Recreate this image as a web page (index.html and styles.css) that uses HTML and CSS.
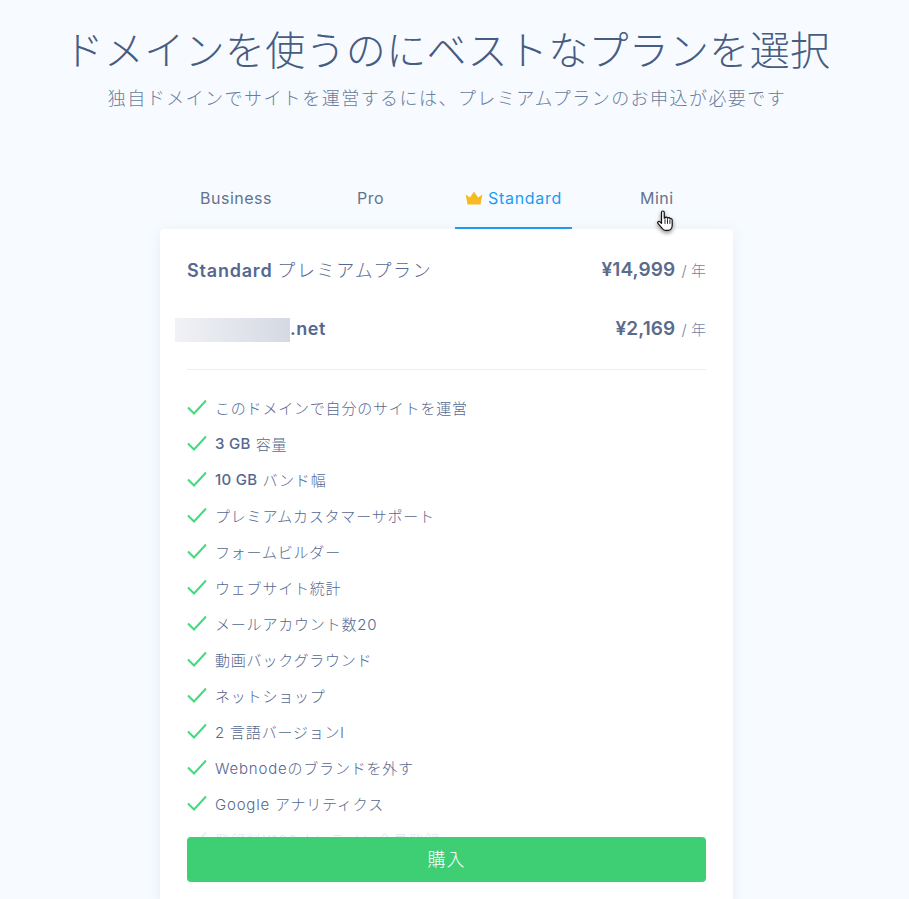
FILE: index.html
```html
<!DOCTYPE html>
<html lang="ja">
<head>
<meta charset="utf-8">
<title>プラン選択</title>
<link rel="stylesheet" href="styles.css">
</head>
<body>
<header class="head">
  <h1 class="title">ドメインを使うのにベストなプランを選択</h1>
  <p class="subtitle">独自ドメインでサイトを運営するには、プレミアムプランのお申込が必要です</p>
</header>
<nav class="tabs">
  <a class="tab tab-business">Business</a>
  <a class="tab tab-pro">Pro</a>
  <a class="tab active"><svg class="crown" viewBox="0 0 18 14"><path d="M.6 3.400 5 6.400 9 .6l4 5.800 4.400-3-1.900 10H2.500z" fill="#f7bb22"/></svg>Standard</a>
  <a class="tab">Mini</a>
</nav>
<main class="card">
  <div class="row first">
    <div class="name"><b>Standard</b> プレミアムプラン</div>
    <div class="price"><b>¥14,999</b> <span>/ 年</span></div>
  </div>
  <div class="row second">
    <div class="domain"><i class="blur"></i><b>.net</b></div>
    <div class="price"><b>¥2,169</b> <span>/ 年</span></div>
  </div>
  <hr class="rule">
  <ul class="features">
    <li><svg class="check" viewBox="0 0 20 16"><path d="M1 8.5 7 14.5 19 1.5"/></svg>このドメインで自分のサイトを運営</li>
    <li><svg class="check" viewBox="0 0 20 16"><path d="M1 8.5 7 14.5 19 1.5"/></svg><b>3 GB</b> 容量</li>
    <li><svg class="check" viewBox="0 0 20 16"><path d="M1 8.5 7 14.5 19 1.5"/></svg><b>10 GB</b> バンド幅</li>
    <li><svg class="check" viewBox="0 0 20 16"><path d="M1 8.5 7 14.5 19 1.5"/></svg>プレミアムカスタマーサポート</li>
    <li><svg class="check" viewBox="0 0 20 16"><path d="M1 8.5 7 14.5 19 1.5"/></svg>フォームビルダー</li>
    <li><svg class="check" viewBox="0 0 20 16"><path d="M1 8.5 7 14.5 19 1.5"/></svg>ウェブサイト統計</li>
    <li><svg class="check" viewBox="0 0 20 16"><path d="M1 8.5 7 14.5 19 1.5"/></svg>メールアカウント数20</li>
    <li><svg class="check" viewBox="0 0 20 16"><path d="M1 8.5 7 14.5 19 1.5"/></svg>動画バックグラウンド</li>
    <li><svg class="check" viewBox="0 0 20 16"><path d="M1 8.5 7 14.5 19 1.5"/></svg>ネットショップ</li>
    <li><svg class="check" viewBox="0 0 20 16"><path d="M1 8.5 7 14.5 19 1.5"/></svg>2 言語バージョンl</li>
    <li><svg class="check" viewBox="0 0 20 16"><path d="M1 8.5 7 14.5 19 1.5"/></svg>Webnodeのブランドを外す</li>
    <li><svg class="check" viewBox="0 0 20 16"><path d="M1 8.5 7 14.5 19 1.5"/></svg>Google アナリティクス</li>
    <li class="faded"><svg class="check" viewBox="0 0 20 16"><path d="M1 8.5 7 14.5 19 1.5"/></svg>登録料¥100オンライン会員登録</li>
  </ul>
  <div class="buy-wrap"><button class="buy">購入</button></div>
</main>
<svg class="cursor" viewBox="0 0 18 26"><path d="M5.2 2.6c0-2 3-2 3 0v6.2l.8-.1c.3-1.300 2.500-1.200 2.800.3.500-1.100 2.500-.9 2.800.6.800-.6 2.200 0 2.200 1.500v5.400c0 3-1.800 5.500-4.500 5.500H9.500c-1.600 0-2.700-.8-3.500-2L1.300 14.600c-1-1.500.8-3.100 2.200-1.800l1.700 1.700z" fill="#fff" stroke="#111" stroke-width="1.300" stroke-linejoin="round"/><path d="M9 10v5M11.700 10v5M14.300 10.500V15" stroke="#111" fill="none"/></svg>
</body>
</html>
```
FILE: styles.css
```css
* { box-sizing: border-box; }
html, body { height: 100%; }
body {
  margin: 0;
  height: 899px;
  overflow: hidden;
  position: relative;
  background: #f7fbff;
  color: #546891;
  font-family: "Inter", "Noto Sans CJK JP", sans-serif;
}
.head { text-align: center; padding-top: 24px; padding-right: 15px; }
.title {
  margin: 0;
  font-size: 40px;
  line-height: 48px;
  font-weight: 300;
  letter-spacing: .3px;
  color: #465c82;
  font-family: "Noto Sans CJK JP", sans-serif;
}
.subtitle {
  margin: 15px 0 0;
  height: 24px;
  font-size: 18px;
  line-height: 24px;
  font-weight: 300;
  letter-spacing: 1.45px;
  color: #6a7b9b;
}
.tabs {
  display: flex;
  margin-top: 66px;
  padding-left: 190px;
  gap: 58px;
  height: 52px;
}
.tab {
  display: flex;
  align-items: center;
  padding: 0 10px 8px;
  height: 52px;
  font-size: 16px;
  font-weight: 400;
  letter-spacing: .5px;
  color: #63738f;
  border-bottom: 2px solid transparent;
}
.tab-business { padding-right: 17px; }
.tab-pro { padding-right: 13px; }
.tab.active { color: #1a9df0; border-bottom-color: #1a9df0; letter-spacing: .7px; }
.crown { width: 18px; height: 14px; margin-right: 5px; }
.card {
  position: relative;
  width: 573px;
  height: 680px;
  margin-left: 160px;
  padding: 0 27px;
  background: #fff;
  border-radius: 4px;
  box-shadow: 0 2px 14px rgba(120,150,190,.14);
}
.row { display: flex; justify-content: space-between; align-items: center; }
.first { padding-top: 26px; height: 54px; }
.second { margin-top: 31px; height: 28px; }
.name { font-size: 18px; font-weight: 300; letter-spacing: 1.7px; }
.name b { font-weight: 600; letter-spacing: .8px; margin-right: -2px; }
.domain { display: flex; align-items: center; font-size: 18px; }
.domain b { font-weight: 600; letter-spacing: .5px; }
.blur {
  display: block;
  width: 115px;
  height: 24px;
  margin: 4px 0 0 -12px;
  background: linear-gradient(90deg, #f1f2f6, #d5d9e3);
}
.price { font-size: 15px; font-weight: 300; color: #75849f; }
.price b { font-size: 19px; font-weight: 600; letter-spacing: .1px; color: #5a6b8c; }
.price span { margin-left: 2px; }
.rule { margin: 27px 0 0; border: 0; border-top: 1px solid #eceff2; }
.features { list-style: none; margin: 19px 0 0; padding: 0; }
.features li {
  display: flex;
  align-items: center;
  height: 36px;
  font-size: 15px;
  font-weight: 300;
  letter-spacing: .8px;
  white-space: pre;
}
.features b { font-weight: 500; letter-spacing: .3px; }
.check {
  flex: none;
  width: 20px;
  height: 16px;
  margin-right: 8px;
  fill: none;
  stroke: #3fdc7c;
  stroke-width: 2;
}
.faded { opacity: .18; }
.buy-wrap {
  position: absolute;
  left: 27px;
  right: 27px;
  top: 608px;
  padding-bottom: 18px;
  background: #fff;
}
.buy {
  display: block;
  width: 100%;
  height: 45px;
  padding: 0 0 4px;
  border: 0;
  border-radius: 4px;
  background: #3ecf74;
  color: #fff;
  font-family: "Noto Sans CJK JP", sans-serif;
  font-size: 18px;
  font-weight: 300;
  letter-spacing: 1px;
}
.cursor {
  position: absolute;
  left: 656px;
  top: 210px;
  width: 18px;
  height: 24px;
  filter: drop-shadow(0 2px 2px rgba(0,0,0,.45));
}
```
